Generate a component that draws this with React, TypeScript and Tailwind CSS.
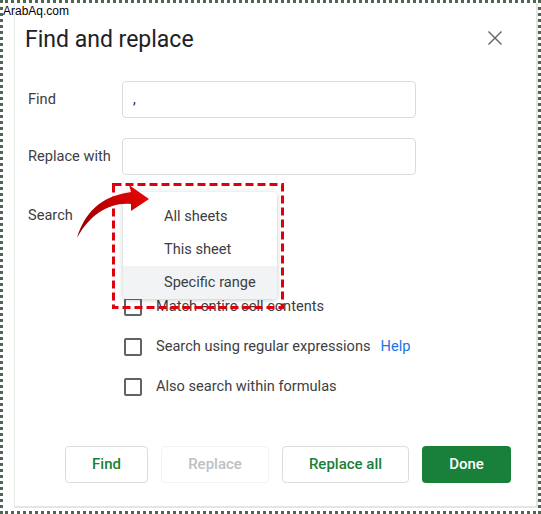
import React from "react";

function Checkbox() {
  return <div className="w-[18px] h-[18px] rounded-[2px] border-2 border-[#5f6368] shrink-0" />;
}

function CheckRow({ label, help }: { label: string; help?: boolean }) {
  return (
    <div className="h-[40px] flex items-center ml-[101px]">
      <Checkbox />
      <span className="ml-[14px] text-[14.6px] text-[#3c4043]">{label}</span>
      {help && <span className="ml-[10px] text-[14.6px] text-[#1a73e8]">Help</span>}
    </div>
  );
}

export default function App() {
  return (
    <div className="relative w-[541px] h-[514px] border-[3px] border-dotted border-[#4f6652] bg-white font-['Roboto',sans-serif] overflow-hidden">
      {/* watermark */}
      <span className="absolute left-0 top-[1px] text-[12px] leading-[14px] text-black font-['Liberation_Sans',Arial,sans-serif] z-20">
        ArabAq.com
      </span>

      {/* Dialog */}
      <div className="ml-[11px] h-[505px] border-l border-r-2 border-b-2 border-l-[#e8eae8] border-r-[#e4e6e4] border-b-[#e4e6e4] pl-[8px] pr-[25px] flex flex-col">
        {/* Title */}
        <div className="mt-[23px] h-[28px] flex items-center justify-between">
          <h1 className="ml-[2px] text-[23px] leading-[28px] text-[#202124]">Find and replace</h1>
          <svg width="24" height="24" viewBox="0 0 24 24" className="mr-[4px] -mt-[4px]">
            <path d="M6 6L18 18M18 6L6 18" stroke="#5f6368" strokeWidth="1.4" strokeLinecap="square" />
          </svg>
        </div>

        {/* Find */}
        <div className="mt-[27px] flex items-center">
          <span className="w-[99px] pl-[5px] text-[14.6px] text-[#3c4043]">Find</span>
          <div className="w-[294px] h-[37px] rounded-[4px] border border-[#dadce0] flex items-center pl-[10px] text-[14px] text-[#202124]">
            ,
          </div>
        </div>

        {/* Replace with */}
        <div className="mt-[20px] flex items-center">
          <span className="w-[99px] pl-[5px] text-[14.6px] text-[#3c4043]">Replace with</span>
          <div className="w-[294px] h-[37px] rounded-[4px] border border-[#dadce0]" />
        </div>

        {/* Search */}
        <div className="mt-[22px] h-[37px] flex items-center">
          <span className="w-[99px] pl-[5px] text-[14.6px] text-[#3c4043]">Search</span>
        </div>

        {/* Options */}
        <div className="mt-[53px] flex flex-col">
          <CheckRow label="Match entire cell contents" />
          <CheckRow label="Search using regular expressions" help />
          <CheckRow label="Also search within formulas" />
        </div>

        {/* Buttons */}
        <div className="mt-[39px] flex justify-end gap-[13px] text-[15px] font-medium">
          <button className="w-[83px] h-[37px] rounded-[4px] border border-[#dadce0] text-[#188038]">Find</button>
          <button className="w-[108px] h-[37px] rounded-[4px] border border-[#f1f3f4] text-[#bdc1c6]">Replace</button>
          <button className="w-[127px] h-[37px] rounded-[4px] border border-[#dadce0] text-[#188038]">Replace all</button>
          <button className="w-[89px] h-[37px] rounded-[4px] bg-[#188038] text-white">Done</button>
        </div>
      </div>

      {/* Dropdown menu */}
      <div className="absolute left-[120px] top-[189px] w-[154px] pt-[8px] bg-white rounded-[4px] shadow-[0_1px_5px_rgba(60,64,67,0.3)] overflow-hidden text-[14.6px] text-[#3c4043] z-10">
        <div className="h-[33px] flex items-center pl-[41px]">All sheets</div>
        <div className="h-[33px] flex items-center pl-[41px]">This sheet</div>
        <div className="h-[33px] flex items-center pl-[41px] bg-[#f1f3f4]">Specific range</div>
      </div>

      {/* Red dashed highlight */}
      <svg className="absolute left-[109px] top-[180px] z-10" width="172" height="126">
        <rect x="1.5" y="1.5" width="169" height="123" fill="none" stroke="#e0000b" strokeWidth="3" strokeDasharray="8 4" />
      </svg>

      {/* Red arrow */}
      <svg className="absolute left-[67px] top-[177px] z-10" width="85" height="62" viewBox="0 0 85 62">
        <defs>
          <linearGradient id="arrowGrad" x1="0" y1="1" x2="1" y2="0">
            <stop offset="0" stopColor="#8e0000" />
            <stop offset="0.6" stopColor="#c80000" />
            <stop offset="1" stopColor="#ee0a0a" />
          </linearGradient>
        </defs>
        <path
          d="M7 58 C14 34 30 16 61 12 L59 5 L79 19 L61 31 L61 24 C40 22 20 34 7 58 Z"
          fill="url(#arrowGrad)"
        />
      </svg>
    </div>
  );
}
